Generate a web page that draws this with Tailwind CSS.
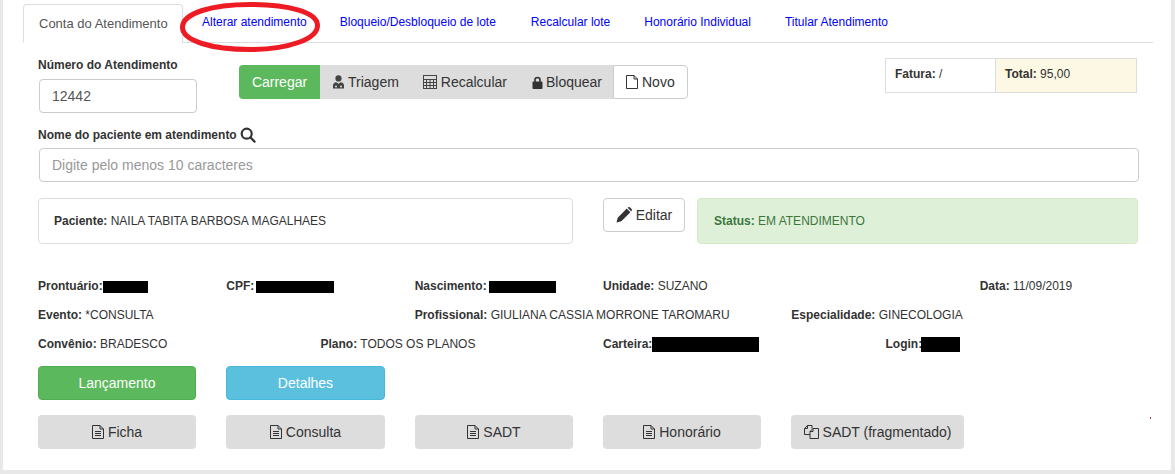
<!DOCTYPE html>
<html lang="en">
<head>
  <meta charset="UTF-8">
  <title>Conta do Atendimento</title>
  <script src="https://cdn.jsdelivr.net/npm/@tailwindcss/browser@4"></script>
</head>
<body class="bg-[#e8e8e8] h-[474px] w-[1175px] overflow-hidden font-['Liberation_Sans',Arial,sans-serif] text-[12px] text-[#333]">
  <div class="relative bg-white ml-[3px] w-[1168px] h-[470px] pl-[20px] pt-[4px]">

    <!-- tabs -->
    <div class="flex w-[1130px] h-[39px] border-b border-[#ddd] text-[#0000ff]">
      <div class="w-[160px] h-[39px] bg-white border border-[#ddd] border-b-white rounded-t-[4px] text-[13px] text-[#555] pl-[15px] leading-[37px]">Conta do Atendimento</div>
      <a class="ml-[19px] leading-[37px]">Alterar atendimento</a>
      <a class="ml-[33px] leading-[37px]">Bloqueio/Desbloqueio de lote</a>
      <a class="ml-[35px] leading-[37px]">Recalcular lote</a>
      <a class="ml-[34px] leading-[37px]">Honorário Individual</a>
      <a class="ml-[34px] leading-[37px]">Titular Atendimento</a>
    </div>

    <!-- red mark -->
    <svg class="absolute left-[177px] top-0" width="142" height="54" viewBox="0 0 142 54" fill="none">
      <path d="M2.5 27C3 13 32 4.5 70 4.5C108 4.5 137 12 137.5 25C138 39 108 49.5 70 49.5C32 49.5 2 41 2.5 27Z" stroke="#ed1c24" stroke-width="5"/>
    </svg>

    <!-- numero + toolbar + fatura -->
    <div class="flex mt-[15px] pl-[15px] h-[75px]">
      <div class="w-[158px]">
        <div class="font-bold leading-[15px] mb-[6px]">Número do Atendimento</div>
        <div class="ml-[1px] w-[158px] h-[34px] border border-[#ccc] rounded-[4px] text-[14px] text-[#555] pl-[12px] leading-[32px]">12442</div>
      </div>
      <div class="ml-[43px] mt-[7px] flex h-[34px] text-[14px] leading-[34px]">
        <div class="w-[81px] bg-[#5cb85c] text-white text-center rounded-l-[4px]">Carregar</div>
        <div class="flex items-center bg-[#ddd] pl-[12px] w-[293px]">
          <svg class="w-[13px] h-[14px] mr-[3px]" viewBox="0 0 13 14" fill="#444">
            <circle cx="6.5" cy="3.4" r="3.1"/>
            <path d="M1 13.5V10.3C1 8.6 2.5 7.4 4.2 7.2L6.5 8.8 8.8 7.2C10.5 7.4 12 8.6 12 10.3V13.5Z"/>
            <circle cx="4" cy="11.5" r="1" fill="#ddd"/><circle cx="9" cy="11.5" r="1" fill="#ddd"/>
          </svg>
          <span>Triagem</span>
          <svg class="w-[14px] h-[14px] ml-[24px] mr-[4px]" viewBox="0 0 14 14" fill="none" stroke="#444"><rect x="0.5" y="0.5" width="13" height="13"/><path d="M0.5 4.5H13.5M0.5 7.5H13.5M0.5 10.5H13.5M3.5 4.5V13.5M7 4.5V13.5M10.5 4.5V13.5"/></svg>
          <span>Recalcular</span>
          <svg class="w-[11px] h-[13px] ml-[25px] mr-[3px]" viewBox="0 0 11 13"><path d="M3 6V4a2.5 2.5 0 0 1 5 0v2" fill="none" stroke="#333" stroke-width="1.6"/><rect x="0.5" y="5.5" width="10" height="7.5" rx="1" fill="#333"/></svg>
          <span>Bloquear</span>
        </div>
        <div class="flex items-center w-[75px] bg-white border border-[#ccc] rounded-r-[4px] pl-[12px] leading-[32px]">
          <svg class="w-[12px] h-[14px] mr-[4px]" viewBox="0 0 12 14" fill="none" stroke="#333"><path d="M0.5 0.5H8L11.5 4V13.5H0.5ZM8 0.5V4H11.5"/></svg>
          <span>Novo</span>
        </div>
      </div>
      <div class="ml-[197px] mt-0 flex w-[252px] h-[35px] border border-[#ddd] leading-[31px]">
        <div class="w-[109px] pl-[9px]"><b>Fatura:</b> /</div>
        <div class="flex-1 bg-[#fcf8e3] border-l border-[#ddd] pl-[9px]"><b>Total:</b> 95,00</div>
      </div>
    </div>

    <!-- nome -->
    <div class="pl-[15px] mt-[-7px] flex items-center h-[17px] font-bold">
      Nome do paciente em atendimento
      <svg class="w-[16px] h-[16px] ml-[3px]" viewBox="0 0 16 16" fill="none" stroke="#333" stroke-width="2.2"><circle cx="6.7" cy="6.7" r="5"/><path d="M10.4 10.4 14.6 14.6" stroke-linecap="round"/></svg>
    </div>
    <div class="ml-[16px] mt-[5px] w-[1100px] h-[34px] border border-[#ccc] rounded-[4px] text-[14px] text-[#999] pl-[12px] leading-[32px]">Digite pelo menos 10 caracteres</div>

    <!-- paciente + editar + status -->
    <div class="flex pl-[15px] mt-[16px] h-[46px]">
      <div class="w-[535px] border border-[#ddd] rounded-[4px] pl-[15px] leading-[44px]"><b>Paciente:</b> NAILA TABITA BARBOSA MAGALHAES</div>
      <div class="ml-[30px] w-[82px] h-[34px] flex items-center justify-center border border-[#ccc] rounded-[4px] text-[14px]">
        <svg class="w-[16px] h-[16px] mr-[4px]" viewBox="0 0 16 16" fill="#333"><path d="M0.5 15.5 1.7 10.7 10.8 1.6 14.4 5.2 5.3 14.3ZM11.7 0.8 12.4 0.2C13 -0.2 13.6 -0.1 14.1 0.4L15.6 1.9C16.1 2.4 16.1 3.1 15.7 3.6L15.2 4.4Z"/></svg>
        Editar
      </div>
      <div class="ml-[12px] w-[441px] bg-[#dff0d8] border border-[#d6e9c6] rounded-[4px] text-[#3c763d] pl-[16px] leading-[44px]"><b>Status:</b> EM ATENDIMENTO</div>
    </div>

    <!-- dados -->
    <div class="mt-[28px] w-[1145px] pl-[15px] leading-[29px]">
      <div class="grid grid-cols-6">
        <div class="flex items-center"><b>Prontuário:</b><span class="bg-black w-[45px] h-[12px]"></span></div>
        <div class="flex items-center"><b>CPF:</b><span class="ml-[2px] bg-black w-[78px] h-[12px]"></span></div>
        <div class="flex items-center"><b>Nascimento:</b><span class="ml-[2px] bg-black w-[67px] h-[12px]"></span></div>
        <div class="col-span-2"><b>Unidade:</b> SUZANO</div>
        <div><b>Data:</b> 11/09/2019</div>
      </div>
      <div class="grid grid-cols-6">
        <div class="col-span-2"><b>Evento:</b> *CONSULTA</div>
        <div class="col-span-2"><b>Profissional:</b> GIULIANA CASSIA MORRONE TAROMARU</div>
        <div class="col-span-2"><b>Especialidade:</b> GINECOLOGIA</div>
      </div>
      <div class="grid grid-cols-4">
        <div><b>Convênio:</b> BRADESCO</div>
        <div><b>Plano:</b> TODOS OS PLANOS</div>
        <div class="flex items-center"><b>Carteira:</b><span class="bg-black w-[107px] h-[15px]"></span></div>
        <div class="flex items-center"><b>Login:</b><span class="ml-[-1px] bg-black w-[39px] h-[15px]"></span></div>
      </div>
    </div>

    <!-- botoes -->
    <div class="mt-[7px] pl-[15px] flex gap-[30px] text-[14px] text-white text-center leading-[32px]">
      <div class="w-[158px] h-[34px] bg-[#5cb85c] border border-[#4cae4c] rounded-[4px]">Lançamento</div>
      <div class="w-[159px] h-[34px] bg-[#5bc0de] border border-[#46b8da] rounded-[4px]">Detalhes</div>
    </div>
    <div class="mt-[15px] pl-[15px] flex gap-[30px] text-[14px]">
      <div class="w-[158px] h-[34px] bg-[#ddd] rounded-[4px] flex items-center justify-center">
        <svg class="w-[12px] h-[14px] mr-[4px]" viewBox="0 0 12 14" fill="none" stroke="#333"><path d="M0.5 0.5H8L11.5 4V13.5H0.5ZM8 0.5V4H11.5M3 6.5H9M3 8.5H9M3 10.5H9"/></svg>Ficha
      </div>
      <div class="w-[159px] h-[34px] bg-[#ddd] rounded-[4px] flex items-center justify-center">
        <svg class="w-[12px] h-[14px] mr-[4px]" viewBox="0 0 12 14" fill="none" stroke="#333"><path d="M0.5 0.5H8L11.5 4V13.5H0.5ZM8 0.5V4H11.5M3 6.5H9M3 8.5H9M3 10.5H9"/></svg>Consulta
      </div>
      <div class="w-[158px] h-[34px] bg-[#ddd] rounded-[4px] flex items-center justify-center">
        <svg class="w-[12px] h-[14px] mr-[4px]" viewBox="0 0 12 14" fill="none" stroke="#333"><path d="M0.5 0.5H8L11.5 4V13.5H0.5ZM8 0.5V4H11.5M3 6.5H9M3 8.5H9M3 10.5H9"/></svg>SADT
      </div>
      <div class="w-[158px] h-[34px] bg-[#ddd] rounded-[4px] flex items-center justify-center">
        <svg class="w-[12px] h-[14px] mr-[4px]" viewBox="0 0 12 14" fill="none" stroke="#333"><path d="M0.5 0.5H8L11.5 4V13.5H0.5ZM8 0.5V4H11.5M3 6.5H9M3 8.5H9M3 10.5H9"/></svg>Honorário
      </div>
      <div class="w-[173px] h-[34px] bg-[#ddd] rounded-[4px] flex items-center justify-center">
        <svg class="w-[15px] h-[14px] mr-[4px]" viewBox="0 0 15 14" fill="none" stroke="#333"><path d="M6 9.5H0.5V3.5L3.5 0.5H8V3.5M3.5 0.5V3.5H0.5M6 13.5V6.5L9 3.5H14.5V13.5ZM9 3.5V6.5H6"/></svg>SADT (fragmentado)
      </div>
    </div>

    <span class="absolute left-[1147px] top-[417px] w-[1px] h-[2px] bg-[#a33]"></span>
  </div>
</body>
</html>
